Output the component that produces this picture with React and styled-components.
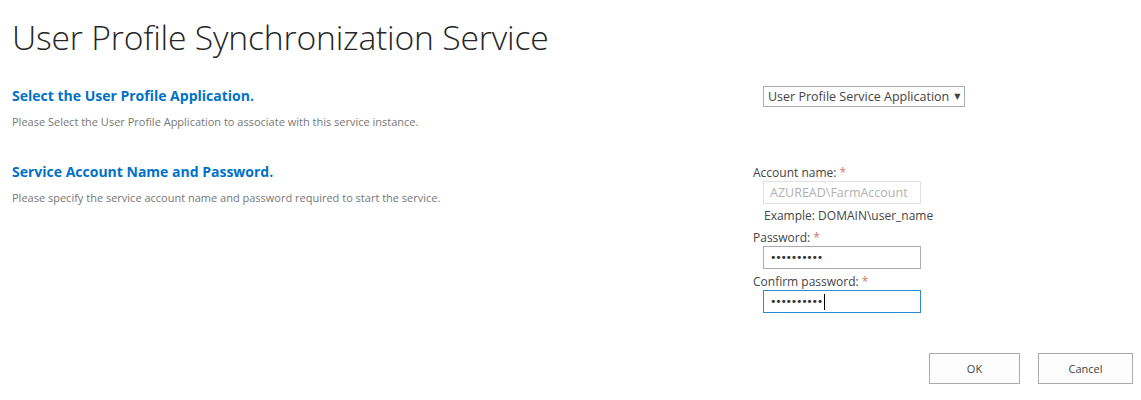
import React from "react";
import styled, { createGlobalStyle } from "styled-components";

const Global = createGlobalStyle`
  html, body { margin: 0; padding: 0; background: #fff; }
  body { font-family: "Open Sans", "Noto Sans", sans-serif; color: #444; }
`;

const Page = styled.div`
  width: 1141px;
  height: 400px;
  box-sizing: border-box;
  padding: 14px 8px 0 12px;
  display: flex;
  flex-direction: column;
`;

const Title = styled.h1`
  margin: 0;
  font-weight: 300;
  font-size: 33.7px;
  line-height: 46px;
  color: #262626;
  letter-spacing: -0.2px;
`;

const Section = styled.div`
  display: flex;
  margin-top: ${(p) => p.$top}px;
`;

const Left = styled.div`
  width: 741px;
  flex: none;
`;

const Right = styled.div`
  display: flex;
  flex-direction: column;
  padding-top: ${(p) => p.$pad || 0}px;
`;

const Heading = styled.h3`
  margin: 0;
  font-size: 14px;
  font-weight: 700;
  color: #0072c6;
  line-height: 20px;
`;

const Desc = styled.div`
  margin-top: 8px;
  font-size: 11px;
  color: #777;
  line-height: 15px;
`;

const Select = styled.div`
  margin-left: 10px;
  width: 202px;
  height: 21px;
  box-sizing: border-box;
  border: 1px solid #ababab;
  display: flex;
  align-items: center;
  padding: 0 4px;
  font-size: 12.5px;
  color: #444;
  gap: 5px;
  white-space: nowrap;
`;

const Arrow = styled.span`
  font-size: 8px;
  color: #444;
  font-family: "DejaVu Sans", sans-serif;
`;

const Label = styled.div`
  font-size: 12px;
  line-height: 16px;
  color: #444;
`;

const Star = styled.span`
  color: #c0392b;
  opacity: 0.7;
`;

const Input = styled.div`
  margin: 0 0 0 10px;
  width: 158px;
  height: 23px;
  box-sizing: border-box;
  border: 1px solid ${(p) => (p.$focused ? "#2a8dd4" : p.$disabled ? "#e1e1e1" : "#ababab")};
  display: flex;
  align-items: center;
  padding: 0 6px;
  font-size: 12.5px;
  color: ${(p) => (p.$disabled ? "#b1b1b1" : "#444")};
  white-space: nowrap;
`;

const Dots = styled.span`
  font-size: 11px;
  letter-spacing: -1.3px;
  color: #333;
  font-family: "DejaVu Sans", sans-serif;
`;

const Caret = styled.span`
  display: inline-block;
  width: 1px;
  height: 16px;
  background: #000;
  margin-left: 2px;
`;

const Example = styled.div`
  margin: 4px 0 6px 11px;
  font-size: 12px;
  line-height: 16px;
  color: #444;
`;

const Gap = styled.div`
  height: ${(p) => p.$h}px;
`;

const Buttons = styled.div`
  display: flex;
  justify-content: flex-end;
  gap: 18px;
  margin-top: 40px;
`;

const Button = styled.button`
  width: ${(p) => p.$w}px;
  height: 31px;
  border: 1px solid #ababab;
  background: #fdfdfd;
  font-family: "Open Sans", "Noto Sans", sans-serif;
  font-size: 11px;
  color: #444;
  padding: 0;
`;

export default function App() {
  return (
    <>
      <Global />
      <Page>
        <Title>User Profile Synchronization Service</Title>
        <Section $top={26}>
          <Left>
            <Heading>Select the User Profile Application.</Heading>
            <Desc>Please Select the User Profile Application to associate with this service instance.</Desc>
          </Left>
          <Right>
            <Select>
              User Profile Service Application <Arrow>▼</Arrow>
            </Select>
          </Right>
        </Section>
        <Section $top={33}>
          <Left>
            <Heading>Service Account Name and Password.</Heading>
            <Desc>Please specify the service account name and password required to start the service.</Desc>
          </Left>
          <Right $pad={3}>
            <Label>
              Account name: <Star>*</Star>
            </Label>
            <Input $disabled>AZUREAD\FarmAccount</Input>
            <Example>Example: DOMAIN\user_name</Example>
            <Label>
              Password: <Star>*</Star>
            </Label>
            <Input>
              <Dots>••••••••••</Dots>
            </Input>
            <Gap $h={5} />
            <Label>
              Confirm password: <Star>*</Star>
            </Label>
            <Input $focused>
              <Dots>••••••••••</Dots>
              <Caret />
            </Input>
          </Right>
        </Section>
        <Buttons>
          <Button $w={91}>OK</Button>
          <Button $w={95}>Cancel</Button>
        </Buttons>
      </Page>
    </>
  );
}
